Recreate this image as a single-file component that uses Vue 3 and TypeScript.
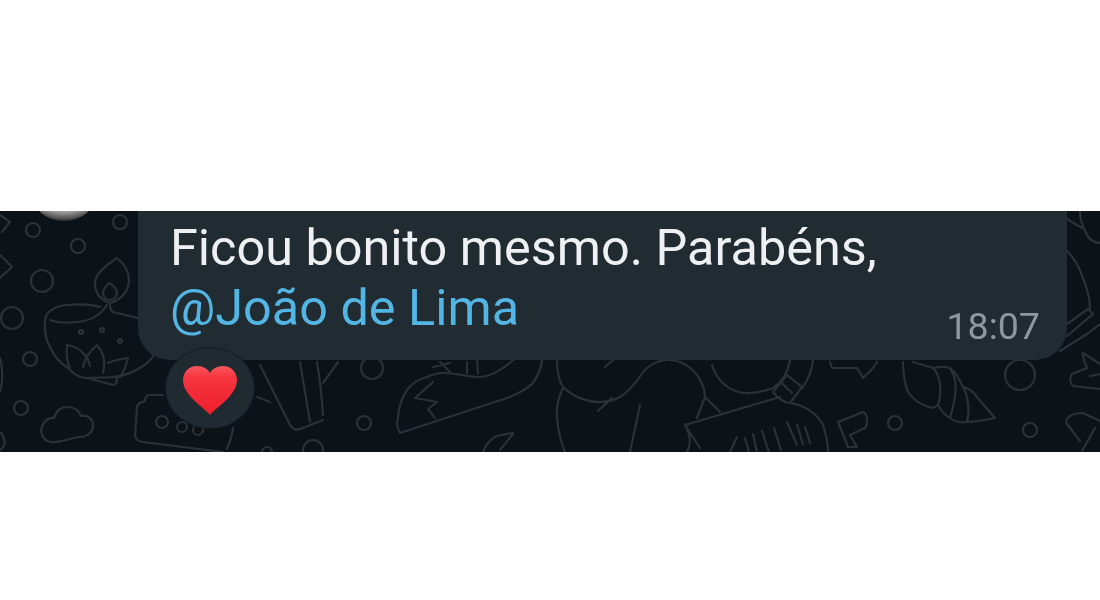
<script setup lang="ts">
const circles: [number, number, number][] = [
  [33, 230, 7], [120, 222, 7], [78, 246, 7], [42, 281, 11], [12, 318, 11], [30, 359, 7], [21, 408, 7],
  [162, 422, 6], [182, 427, 5], [198, 430, 5],
  [372, 368, 11], [364, 423, 7], [313, 450, 10], [267, 452, 5],
  [1020, 375, 15], [895, 423, 7], [1030, 430, 7], [81, 332, 2], [102, 330, 2], [120, 341, 2]
]

const doodles: string[] = [
  // lamp
  'M117 258C105 266 95 274 95 284C95 294 102 301 110 303C121 300 129 291 129 280C129 271 123 263 117 258Z',
  'M109 283C105 287 103 290 103 293C103 297 106 300 110 300C114 300 117 297 117 293C117 289 113 285 109 283Z',
  'M45 320C46 311 56 306 67 305C78 304 90 304 100 307M50 320C58 323 68 323 77 322C90 321 100 316 107 305',
  'M110 305C110 309 111 311 113 312L138 318',
  'M45 320C44 330 46 340 50 347C54 356 60 363 68 368M113 377C122 376 132 373 140 368C147 364 152 359 155 353',
  'M67 345C74 346 80 349 83 353C87 357 89 361 90 366M97 345C91 350 85 358 83 367M97 345C103 352 106 359 103 373M128 358C121 359 114 360 108 363M128 358C126 366 123 373 120 377M67 345C66 354 67 362 70 368',
  'M70 370C76 376 82 378 87 378L113 385C116 385 117 382 117 378M87 378L120 377',
  // cloud
  'M50 442C42 440 40 431 42 427C44 420 50 417 54 418C56 410 62 407 67 407C74 407 79 411 81 416C88 414 94 420 93 427C92 434 85 437 80 437C70 438 60 443 50 442Z',
  // card
  'M163 395L150 395C146 395 145 398 145 401L140 403C138 404 137 406 137 408L135 435C135 439 139 442 143 442L223 452M233 428C232 436 229 444 227 449',
  // pen
  'M260 365L290 425C292 429 297 431 303 428L323 420M300 362L310 422M317 362C320 380 322 400 323 415M338 362L323 383M257 397L270 402',
  // tail
  'M400 433C396 427 397 421 398 417C399 407 402 397 407 390C412 383 419 379 427 377C433 374 438 373 443 373C455 373 468 377 480 377C492 376 505 368 513 360',
  'M400 433L507 398C520 393 528 388 533 383C538 376 541 368 542 360',
  'M433 382L415 398L437 402L428 409L435 418',
  'M433 367L450 363M450 372L440 362M467 362V373M477 360L478 373',
  'M513 433C505 434 498 435 493 438C488 442 485 447 483 452M513 434L500 450',
  // figure
  'M557 360C557 372 559 381 563 387C572 396 586 402 600 402C608 402 616 400 623 395C632 388 638 380 643 372C650 364 658 360 668 360C680 360 690 366 697 375C702 382 705 390 705 397',
  'M612 398L598 411M613 360L605 367M563 388C558 398 556 408 557 418C558 430 561 442 565 452M640 405L630 452',
  'M705 397L720 412M705 397L697 418',
  // comb and glass
  'M712 365C717 381 730 393 747 393C757 393 766 391 773 388C782 382 788 372 790 360',
  'M773 392L787 375L802 387L790 403C785 403 778 398 773 392ZM782 383L792 393M813 360C812 371 808 380 802 388',
  'M685 425L780 397M685 425L700 448M685 425C690 434 692 443 687 452M790 403C805 405 817 414 823 425C826 434 828 443 828 452',
  'M730 452L737 437M745 438L749 452M757 452L753 434M769 452L762 431M774 428L781 450M787 422L797 445M797 425L803 444M805 427L810 443',
  // p shape
  'M838 422L863 412C868 414 868 424 865 428L850 435L857 447L848 447Z',
  // puzzle
  'M830 362L832 368L857 368L863 378L873 368L877 362',
  // shell
  'M903 362C903 374 905 384 908 392C914 401 923 406 933 408C935 407 937 406 938 405C942 412 946 416 950 418C955 422 961 423 967 422C972 422 985 420 995 418L977 397C973 391 968 388 963 387C959 378 955 372 950 368C944 366 938 367 933 368C927 366 920 364 913 362',
  'M933 368C941 376 942 392 938 405M950 368C957 378 958 392 950 418M963 387C968 396 970 410 967 422',
  // right side
  'M1067 251C1075 259 1080 269 1083 278C1087 288 1090 298 1090 309',
  'M1067 324L1088 309L1093 314L1067 336M1100 324L1087 334L1060 351',
  'M1080 211C1080 216 1081 222 1083 226C1085 231 1087 236 1090 239C1094 242 1097 243 1100 243M1067 219L1082 228',
  'M1083 353C1082 358 1086 364 1087 368L1072 374C1069 378 1070 383 1073 386L1100 389M1083 353L1100 364M1090 376L1100 374',
  'M1067 424C1064 419 1070 413 1083 413L1100 421M1067 424L1080 441M1095 428L1082 451',
  // left edge
  'M0 215L10 222L2 232M0 255L12 267L0 278M0 358C3 370 3 382 0 392M0 432C6 438 6 446 0 450'
]

const heartPath = 'M27 49C24 45 14 38 7 30C3 25 0 20 0 14C0 6 6 0 14 0C20 0 25 3 27 7C29 3 34 0 40 0C48 0 54 6 54 14C54 20 51 25 47 30C40 38 30 45 27 49Z'
</script>

<template>
  <div class="page">
    <div class="chat">
      <svg class="wallpaper" viewBox="0 211 1100 241" width="1100" height="241">
        <defs>
          <radialGradient id="avatar" cx="50%" cy="20%" r="80%">
            <stop offset="0%" stop-color="#f2f2f2" />
            <stop offset="75%" stop-color="#a0a0a0" />
            <stop offset="100%" stop-color="#333" />
          </radialGradient>
        </defs>
        <ellipse cx="64" cy="198" rx="30" ry="23" fill="url(#avatar)" />
        <g fill="none" stroke="#2b3137" stroke-width="2.2" stroke-linecap="round" stroke-linejoin="round">
          <circle v-for="(c, i) in circles" :key="i" :cx="c[0]" :cy="c[1]" :r="c[2]" />
          <path v-for="(d, i) in doodles" :key="i" :d="d" />
        </g>
      </svg>
      <div class="bubble">
        <p class="text">Ficou bonito mesmo. Parabéns,<br /><span class="mention">@João de Lima</span></p>
        <span class="time">18:07</span>
      </div>
      <div class="reaction">
        <svg class="heart" viewBox="0 0 54 49" width="54" height="49">
          <defs>
            <linearGradient id="heart-fill" x1="0" y1="0" x2="0" y2="1">
              <stop offset="0%" stop-color="#f9565c" />
              <stop offset="25%" stop-color="#f5343e" />
              <stop offset="100%" stop-color="#ee1f2c" />
            </linearGradient>
          </defs>
          <path :d="heartPath" fill="url(#heart-fill)" />
        </svg>
      </div>
    </div>
  </div>
</template>

<style scoped>
.page {
  width: 1100px;
  height: 600px;
  padding-top: 211px;
  box-sizing: border-box;
  background: #fff;
  font-family: Roboto, "Liberation Sans", sans-serif;
}

.chat {
  position: relative;
  height: 241px;
  padding-left: 138px;
  background: #0b1319;
  overflow: hidden;
}

.wallpaper {
  position: absolute;
  left: 0;
  top: 0;
  filter: blur(0.5px);
}

.bubble {
  position: relative;
  display: flex;
  justify-content: space-between;
  align-items: flex-end;
  box-sizing: border-box;
  width: 929px;
  height: 149px;
  padding: 7px 27px 14px 32px;
  border-radius: 0 0 32px 32px;
  background: #212b32;
}

.text {
  align-self: flex-start;
  margin: 0;
  font-size: 50.4px;
  line-height: 59.5px;
  color: #eef0f1;
  filter: blur(0.4px);
}

.mention {
  color: #53b5e3;
}

.time {
  font-size: 37.6px;
  line-height: 40px;
  color: #8c979e;
  filter: blur(0.4px);
}

.reaction {
  position: absolute;
  left: 165px;
  top: 136px;
  display: flex;
  align-items: center;
  justify-content: center;
  width: 90px;
  height: 82px;
  box-sizing: border-box;
  padding-top: 5px;
  border: 1px solid #141d24;
  border-radius: 50%;
  background: #1f2a31;
}

.heart {
  filter: blur(0.4px);
}
</style>
